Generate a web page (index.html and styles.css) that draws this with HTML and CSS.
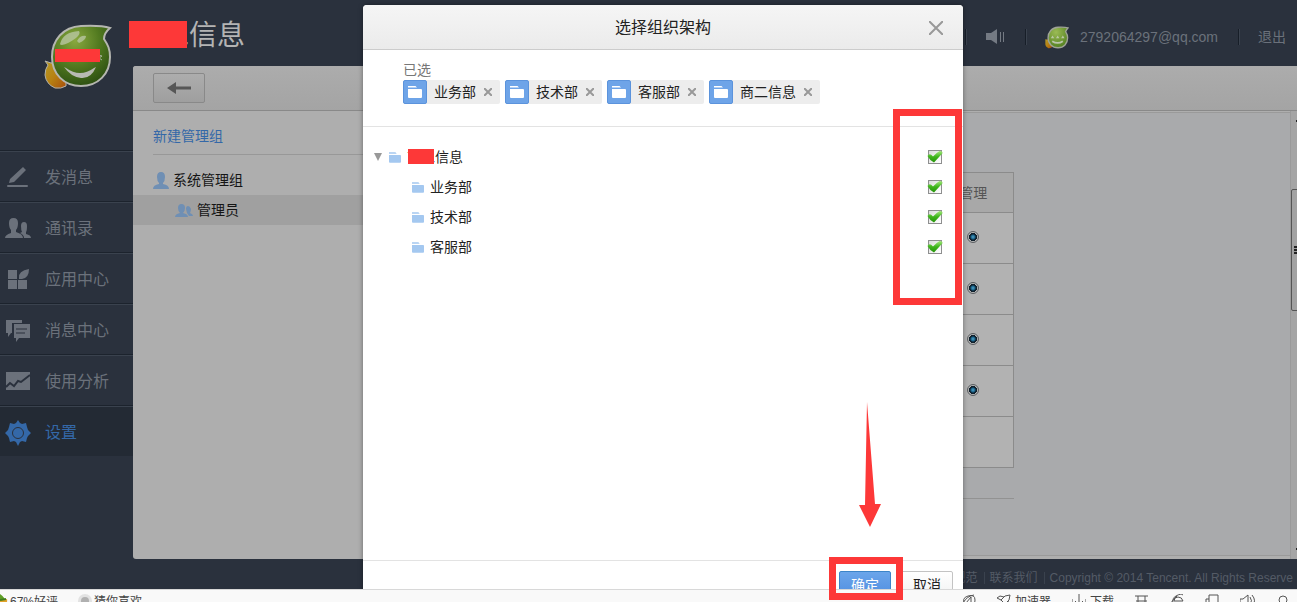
FILE: index.html
```html
<!DOCTYPE html>
<html lang="zh-CN">
<head>
<meta charset="utf-8">
<title>选择组织架构</title>
<link rel="stylesheet" href="styles.css">
</head>
<body>
<svg class="defs" aria-hidden="true">
  <defs>
    <radialGradient id="green" cx="40%" cy="25%" r="75%"><stop offset="0" stop-color="#89a83f"/><stop offset=".55" stop-color="#527a20"/><stop offset="1" stop-color="#2f5212"/></radialGradient>
    <radialGradient id="lime" cx="40%" cy="25%" r="80%"><stop offset="0" stop-color="#9bbb55"/><stop offset="1" stop-color="#4f7d1d"/></radialGradient>
    <linearGradient id="orange" x1="0" y1="0" x2="1" y2="1"><stop offset="0" stop-color="#b59a28"/><stop offset=".5" stop-color="#b78112"/><stop offset="1" stop-color="#a84e0c"/></linearGradient>
    <linearGradient id="tick" x1="0" y1="0" x2="0" y2="1"><stop offset="0" stop-color="#a5e97c"/><stop offset=".5" stop-color="#3fb51d"/><stop offset="1" stop-color="#239208"/></linearGradient>
    <symbol id="folder" viewBox="0 0 14 12"><path d="M0 0h7.500l1.500 1.500H0zM0 3h13q1 0 1 1v7q0 1-1 1H1q-1 0-1-1z"/></symbol>
    <symbol id="check" viewBox="0 0 16 15"><path d="M.5 6Q2.500 2.500 6 6.500Q9 3 12.500 1Q15 .5 15.700 3Q12 7 7 12.500Q2.500 10 .5 6z" fill="url(#tick)"/></symbol>
  </defs>
</svg>

<div class="viewport">
  <aside class="sidebar">
    <div class="brand">
      <svg class="logo" viewBox="0 0 70 66" width="70" height="66" aria-hidden="true">
        <path d="M2 38l6 2 8-1 7 4v20q-5 3-11 2Q3 61 2 52q0-6 3-10z" fill="url(#orange)" stroke="#b3b3ad" stroke-width="1"/>
        <path d="M67 5Q58 2 38 3C20 4 9 17 9 34c0 17 12 29 29 29s29-12 29-29c0-8-2-12-6-18Q61 10 67 5z" fill="url(#green)" stroke="#b5b6b0" stroke-width="2"/>
        <path d="M17 21Q20 9 36 8q2 3-3 7-8 6-14 7-2 0-2-1zM34 18q3-6 9-5 0 4-7 7z" fill="#b4c39b" opacity=".85"/>
        <path d="M21 44l2 1q14 10 28 0l2-1q-5 12-15 11-10-1-17-11z" fill="#b8bab2"/><path d="M55 32l4 1-3 2 3 2" fill="none" stroke="#a8b49a"/>
      </svg>
      <span class="mask mask-logo"></span>
    </div>
    <nav class="nav">
      <a href="#"><svg viewBox="0 0 26 24"><path d="M4 17l1-4L18 1l3 3L9 16z M3 19h19q1 0 1 1t-1 1H3q-1 0-1-1t1-1z"/></svg>发消息</a>
      <a href="#"><svg viewBox="0 0 26 24"><path d="M4 6q0-5 4.500-5T13 6q0 5-2 7v2q7 2 7 6H0q0-3 6-5v-3q-2-2-2-7zM16 9q0-4 3-4t3 4q0 5-1 6v2q5 1 5 4h-7q0-3-4-5l2-1q-1-2-1-6z"/></svg>通讯录</a>
      <a href="#"><svg viewBox="0 0 26 24"><path d="M3 2h9v9H3zM3 12h9v9H3zM13 12h9v9h-9zM14 10Q13 3 24 1q0 9-7 10h-3z"/></svg>应用中心</a>
      <a href="#"><svg viewBox="0 0 26 24"><path d="M1 1h16v3H7v10H6l-3 4v-4H1z"/><path d="M9 5h16v14H14l-3 4v-4H9z"/><path d="M11 10h11M11 14h9" class="cut"/></svg>消息中心</a>
      <a href="#"><svg viewBox="0 0 26 24"><path d="M1 2h24v18H1z"/><path d="M1 17l4-4 4 3 4-5 3 1 9-7" class="cut thick"/></svg>使用分析</a>
      <a href="#" class="active"><svg viewBox="0 0 26 26"><path d="M11 3l2-3 2 3 2 1 4-1 1 4 1 3 3 3-3 3-1 2-1 4-4-1-2 1-2 4-2-4-2-1-4 1-1-4-1-2-3-3 3-3 1-3 1-4 4 1z"/><circle cx="13" cy="13" r="5.500" class="cut"/></svg>设置</a>
    </nav>
  </aside>

  <main class="main">
    <header class="topbar">
      <h1 class="title">二信息<span class="mask mask-title"></span></h1>
      <div class="user">
        <i class="sep"></i>
        <svg class="speaker" viewBox="0 0 20 16" width="20" height="16"><path d="M1 4h5l6-4v15l-6-4H1z" fill="#747a83"/><path d="M15.500 3v10M18.500 3v10" stroke="#747a83"/></svg>
        <i class="sep"></i>
        <svg class="avatar" viewBox="0 0 70 66" width="24" height="23"><path d="M1 38l20 3v20q-5 4-11 3Q1 60 1 52z" fill="url(#orange)"/><path d="M67 5Q58 2 38 3C20 4 9 17 9 34c0 17 12 29 29 29s28-12 28-29c0-8-2-12-6-18Q62 10 67 5z" fill="url(#lime)" stroke="#9fa396" stroke-width="4"/><path d="M17 35l5-8 5 8zM32 35l5-8 5 8zM47 35l5-8 5 8z" fill="#bac8a5"/><path d="M21 44q16 10 31 0" fill="none" stroke="#bcc5ad" stroke-width="5"/></svg>
        <span>2792064297@qq.com</span>
        <i class="sep"></i>
        <a href="#">退出</a>
      </div>
    </header>

    <div class="panel">
      <div class="toolbar">
        <button class="back" type="button" aria-label="返回"><svg viewBox="0 0 24 12" width="24" height="12"><path d="M0 6l9-6v4.500h15v3H9V12z" fill="#565656"/></svg></button>
      </div>
      <div class="columns">
        <section class="groups">
          <a class="new-group" href="#">新建管理组</a>
          <div class="group"><svg viewBox="0 0 16 17" width="16" height="17"><path d="M4 5q0-5 4-5t4 5q0 4-2 6v1q6 1 6 5H0q0-4 6-5v-1Q4 9 4 5z"/></svg>系统管理组</div>
          <div class="group sub"><svg viewBox="0 0 18 13" width="18" height="13"><path d="M3 4q0-4 3.500-4T10 4q0 3-2 5 5 1 5 4H0q0-3 5-4-2-2-2-5zM11 5q0-3 2-3t3 3q0 2-1 4 3 1 3 3h-4l-2-3z"/></svg>管理员</div>
        </section>
        <section class="content">
          <table class="grid">
            <thead><tr><th></th><th class="manage">管理</th></tr></thead>
            <tbody>
              <tr><td></td><td><input type="radio" name="r1" aria-label="管理 1" checked></td></tr>
              <tr><td></td><td><input type="radio" name="r2" aria-label="管理 2" checked></td></tr>
              <tr><td></td><td><input type="radio" name="r3" aria-label="管理 3" checked></td></tr>
              <tr><td></td><td><input type="radio" name="r4" aria-label="管理 4" checked></td></tr>
              <tr><td></td><td></td></tr>
            </tbody>
          </table>
          <hr class="rule">
        </section>
        <div class="scroll"><i class="arrow-up"></i><div class="thumb"><i></i></div><i class="arrow-down"></i></div>
      </div>
    </div>

    <footer class="footer">
      <a href="#">规范</a><i></i><a href="#">联系我们</a><i></i><span>Copyright © 2014 Tencent. All Rights Reserve</span>
    </footer>
  </main>

  <div class="overlay">
    <div class="modal" role="dialog" aria-labelledby="dlg">
      <header class="modal-head">
        <h2 id="dlg">选择组织架构</h2>
        <button class="close" type="button" aria-label="关闭"><svg viewBox="0 0 14 14" width="14" height="14"><path d="M0 0l14 14M14 0L0 14"/></svg></button>
      </header>
      <div class="selected">
        <p>已选</p>
        <ul class="chips">
          <li><b><svg width="14" height="12"><use href="#folder"/></svg></b>业务部<button type="button" aria-label="移除业务部"><svg viewBox="0 0 8 8" width="8" height="8"><path d="M0 0l8 8M8 0L0 8"/></svg></button></li>
          <li><b><svg width="14" height="12"><use href="#folder"/></svg></b>技术部<button type="button" aria-label="移除技术部"><svg viewBox="0 0 8 8" width="8" height="8"><path d="M0 0l8 8M8 0L0 8"/></svg></button></li>
          <li><b><svg width="14" height="12"><use href="#folder"/></svg></b>客服部<button type="button" aria-label="移除客服部"><svg viewBox="0 0 8 8" width="8" height="8"><path d="M0 0l8 8M8 0L0 8"/></svg></button></li>
          <li><b><svg width="14" height="12"><use href="#folder"/></svg></b>商二信息<button type="button" aria-label="移除商二信息"><svg viewBox="0 0 8 8" width="8" height="8"><path d="M0 0l8 8M8 0L0 8"/></svg></button></li>
        </ul>
      </div>
      <div class="tree">
        <label class="node root"><i class="caret"></i><svg width="12" height="11"><use href="#folder"/></svg><span class="name">商二信息<span class="mask mask-root"></span></span><span class="box"><input type="checkbox" checked><svg width="16" height="15"><use href="#check"/></svg></span></label>
        <label class="node"><svg width="12" height="11"><use href="#folder"/></svg><span class="name">业务部</span><span class="box"><input type="checkbox" checked><svg width="16" height="15"><use href="#check"/></svg></span></label>
        <label class="node"><svg width="12" height="11"><use href="#folder"/></svg><span class="name">技术部</span><span class="box"><input type="checkbox" checked><svg width="16" height="15"><use href="#check"/></svg></span></label>
        <label class="node"><svg width="12" height="11"><use href="#folder"/></svg><span class="name">客服部</span><span class="box"><input type="checkbox" checked><svg width="16" height="15"><use href="#check"/></svg></span></label>
      </div>
      <footer class="modal-foot">
        <button class="btn primary" type="button">确定</button>
        <button class="btn" type="button">取消</button>
      </footer>
    </div>
  </div>
</div>

<div class="statusbar">
  <div class="status-left">
    <svg viewBox="0 0 8 12" width="8" height="12"><path d="M0 0q5 3 5 8H0z" fill="#5f9e25"/><path d="M0 6l7-1q1 5-4 7H0z" fill="#e2a32b"/><path d="M0 6l6-1" stroke="#3f7d1c" stroke-width="2"/></svg>
    <span class="rating">67%好评</span>
    <svg viewBox="0 0 14 14" width="14" height="14"><circle cx="7" cy="7" r="7" fill="#e2e2e2"/><circle cx="7" cy="7" r="4" fill="#b0b0b0"/></svg>
    <span>猜你喜欢</span>
  </div>
  <div class="status-right">
    <svg viewBox="0 0 14 14" width="14" height="14"><path d="M3 11Q-1 4 6 2q7-2 7 4t-5 7M4 9l5-6v9M1 9q4-7 11-8"/></svg>
    <svg class="rocket" viewBox="0 0 14 14" width="14" height="14"><path d="M4 6l4-4 5-1-1 5-4 4zM4 6L0 4l3-2 4 1M8 10l1 4 3-3-1-4M3 9l-2 3"/></svg><span class="speed">加速器</span>
    <svg viewBox="0 0 14 14" width="14" height="14"><path d="M7 0v10M3 7l4 4 4-4M0 5v8h14V5"/></svg><span class="down">下载</span>
    <svg viewBox="0 0 14 14" width="14" height="14"><path d="M0 2h13M3 2v11M10 2v11M1 7h11"/></svg>
    <svg viewBox="0 0 14 14" width="14" height="14"><path d="M13 7H4q0-4 4-4t5 4M11 10q-5 4-8-1-1-5 3-7 5-3 7-1M1 13Q-1 9 7 2"/></svg>
    <svg viewBox="0 0 14 14" width="14" height="14"><path d="M4 1h9v12H4zM1 5h3M1 5v8"/></svg>
    <svg viewBox="0 0 16 14" width="16" height="14"><path d="M0 5h3l5-4v12l-5-4H0zM10 3q3 4 0 7M12 1q5 6 0 11"/></svg>
    <svg viewBox="0 0 14 14" width="14" height="14"><circle cx="6" cy="6" r="4"/><path d="M9 9l4 4"/></svg>
  </div>
</div>

<div class="annotations" aria-hidden="true">
  <div class="canvas">
    <span class="frame frame-checks"></span>
    <svg class="pointer" viewBox="0 0 22 125" width="22" height="125"><path d="M8 0l8 102h6l-11 23L0 103h6z" fill="#fd3838"/></svg>
    <span class="frame frame-ok"></span>
  </div>
</div>
</body>
</html>
```
FILE: styles.css
```css
* { box-sizing: border-box; }
body {
  margin: 0;
  height: 100vh;
  display: flex;
  flex-direction: column;
  position: relative;
  overflow: hidden;
  background: #2a313d;
  font: 14px/20px "Liberation Sans", "Noto Sans CJK SC", sans-serif;
  color: #222;
}
a { color: inherit; text-decoration: none; }
button { font: inherit; padding: 0; border: 0; background: none; cursor: pointer; }
h1, h2, p, ul { margin: 0; padding: 0; font-weight: normal; }
svg { display: block; flex: none; }
.defs { position: absolute; width: 0; height: 0; }
.mask { position: absolute; background: #fd3838; }

.viewport { flex: 1; min-height: 0; display: flex; position: relative; overflow: hidden; }

/* sidebar */
.sidebar { width: 133px; flex: none; }
.brand { position: relative; height: 150px; padding: 23px 0 0 43px; }
.mask-logo { left: 55px; top: 49px; width: 45px; height: 13px; }
.nav a {
  display: flex;
  align-items: center;
  gap: 14px;
  height: 51px;
  padding: 4px 0 0 5px;
  border-top: 1px solid #1c232d;
  box-shadow: inset 0 1px #3a424e;
  font-size: 16px;
  color: #6b717b;
}
.nav svg { width: 26px; height: 24px; fill: #6b717b; }
.nav .cut { fill: none; stroke: #2a313d; stroke-width: 1; }
.nav .thick { stroke-width: 2; }
.nav .active { background: #232a34; color: #3468a8; }
.nav .active svg { fill: #3468a8; height: 26px; }

/* main */
.main { flex: 1; min-width: 0; display: flex; flex-direction: column; }
.topbar { height: 66px; flex: none; display: flex; justify-content: space-between; padding: 0 11px 0 0; }
.title { position: relative; padding: 16px 0 0 28px; font-size: 28px; line-height: 40px; color: #b4b4b4; }
.mask-title { left: -4px; top: 21px; width: 58px; height: 27px; }
.user { display: flex; align-items: center; padding-top: 8px; color: #6b717b; }
.user .sep { width: 1px; height: 16px; margin: 0 19px 0 20px; background: #171e28; box-shadow: 1px 0 #3a424e; }
.user .avatar { margin-right: 11px; }

.panel { flex: 1; min-height: 0; display: flex; flex-direction: column; background: #aeaeae; border-radius: 3px 0 0 3px; overflow: hidden; }
.toolbar { height: 45px; flex: none; padding: 7px 20px; border-bottom: 1px solid #898989; background: linear-gradient(#acacac, #a4a4a4); }
.back { display: grid; place-items: center; width: 52px; height: 30px; border: 1px solid #898989; border-radius: 2px; background: linear-gradient(#adadad, #9f9f9f); }
.columns { flex: 1; min-height: 0; display: flex; }
.groups { width: 232px; flex: none; border-right: 1px solid #8c8c8c; }
.new-group { display: block; margin: 0 0 10px 20px; padding: 15px 0 8px; border-bottom: 1px solid #989898; color: #3468a8; }
.group { display: flex; align-items: center; gap: 4px; height: 30px; padding-left: 20px; color: #151515; }
.group svg { fill: #6f8fb4; }
.group.sub { padding-left: 42px; background: #a0a0a0; }
.content { flex: 1; min-width: 0; margin: 1px 0 3px; padding: 59px 20px 0; border: solid #9a9a9a; border-width: 1px 0; background: #a9aaac; }
.grid { width: 629px; border: 1px solid #8b8b8b; border-collapse: collapse; table-layout: fixed; background: #b2b2b2; }
.grid th, .grid td { height: 51px; padding: 0; border: 1px solid #8b8b8b; border-width: 1px 0; text-align: center; }
.grid td { padding-bottom: 2px; }
.grid th { height: 40px; background: #a8a8a8; font-weight: normal; color: #555; }
.grid .manage { width: 80px; }
.grid input {
  appearance: none;
  display: block;
  width: 12px;
  height: 12px;
  margin: 0 auto;
  border: 1px solid #5b5f62;
  border-radius: 50%;
  background: radial-gradient(circle at center, #58a3c4 0, #14618a 2px, #10202c 3px, #10202c 4px, #b4b4b4 4px);
}
.rule { width: 629px; margin: 30px 0 0; border: 0; border-top: 1px solid #929292; }
.scroll { width: 7px; flex: none; border-left: 1px solid #9a9a9a; background: #a5a5a5; display: flex; flex-direction: column; overflow: hidden; }
.arrow-up, .arrow-down { width: 3px; height: 2px; margin: 9px 0 0 5px; background: #222; }
.arrow-down { margin: auto 0 9px 5px; }
.thumb { height: 122px; width: 14px; margin-top: 67px; padding: 56px 0 0 2px; border: 1px solid #555; border-radius: 2px; background: #a2a2a2; }
.thumb i { display: block; width: 8px; height: 8px; background: repeating-linear-gradient(#222 0 2px, #999 2px 3px); }

.footer { height: 30px; flex: none; display: flex; align-items: center; justify-content: flex-end; padding: 8px 4px 0 0; font-size: 12px; color: #545b66; white-space: nowrap; }
.footer i { width: 1px; height: 12px; margin: 0 5px 0 6px; background: #3a424e; }

/* dialog */
.overlay { position: absolute; inset: 0; display: flex; justify-content: center; align-items: flex-start; padding: 5px 0 0 29px; }
.modal { width: 600px; background: #fff; border-radius: 4px; box-shadow: 0 0 5px rgba(0, 0, 0, .4); }
.modal-head { position: relative; height: 45px; border-bottom: 1px solid #ccc; border-radius: 4px 4px 0 0; background: linear-gradient(#f5f5f5, #ebebeb); text-align: center; }
.modal-head h2 { font-size: 16px; line-height: 46px; color: #222; }
.close { position: absolute; right: 20px; top: 16px; }
.close path { stroke: #999; stroke-width: 2; }
.selected { padding: 10px 40px 22px; border-bottom: 1px solid #e3e3e3; }
.selected p { color: #777; }
.chips { display: flex; gap: 5px; list-style: none; }
.chips li { display: flex; align-items: center; height: 24px; border-radius: 2px; background: #ededed; }
.chips b { display: grid; place-items: center; width: 24px; height: 24px; margin-right: 7px; border: 1px solid #5b93dc; border-radius: 2px; background: #6ea4e8; fill: #fff; }
.chips button { padding: 8px; }
.chips path { stroke: #999; stroke-width: 2; }
.tree { min-height: 433px; padding: 15px 21px 0 11px; }
.node { display: flex; align-items: center; height: 30px; padding-left: 38px; }
.node.root { padding-left: 0; }
.node > svg { margin-right: 6px; fill: #a4c8f0; }
.caret { margin-right: 7px; border: solid transparent; border-width: 8px 4px 0; border-top-color: #999; }
.name { position: relative; flex: 1; }
.mask-root { left: 1px; top: 2px; width: 26px; height: 15px; }
.box { position: relative; }
.box input { appearance: none; display: block; width: 14px; height: 14px; margin: 0; border: 1px solid #8e8f8f; background: linear-gradient(135deg, #dcdcdc, #fff); }
.box svg { position: absolute; left: -1px; top: 0; }
.modal-foot { display: flex; justify-content: flex-end; gap: 10px; height: 50px; padding: 10px; border-top: 1px solid #e3e3e3; }
.btn { width: 52px; height: 28px; border: 1px solid #c3c3c3; border-radius: 2px; background: linear-gradient(#fff, #f1f1f1); color: #222; }
.btn.primary { border-color: #3c84c8; background: linear-gradient(#6ba5ea, #4f8de0); color: #fff; }

/* browser status bar */
.statusbar { height: 13px; flex: none; display: flex; justify-content: space-between; padding: 4px 6px 0 0; border-top: 1px solid #d8d8d8; background: #f9f9f9; overflow: hidden; font-size: 12px; line-height: 16px; color: #444; }
.status-left, .status-right { display: flex; align-items: flex-start; white-space: nowrap; }
.status-left svg { margin-right: 2px; }
.rating { margin-right: 20px; }
.status-right svg { margin-right: 21px; fill: none; stroke: #555; }
.status-right .rocket { margin-right: 4px; }
.speed { margin-right: 21px; }
.speed + svg { margin-right: 4px; }
.down { margin-right: 21px; }
.status-right svg:last-child { margin-right: 0; }

/* marks drawn over the screen */
.annotations { position: absolute; inset: 0; display: flex; justify-content: center; padding-left: 29px; pointer-events: none; }
.canvas { position: relative; width: 600px; }
.frame { position: absolute; border: 7px solid #fd3838; }
.frame-checks { left: 530px; top: 109px; width: 69px; height: 196px; }
.frame-ok { left: 466px; top: 557px; width: 74px; height: 43px; }
.pointer { position: absolute; left: 496px; top: 402px; }
```
